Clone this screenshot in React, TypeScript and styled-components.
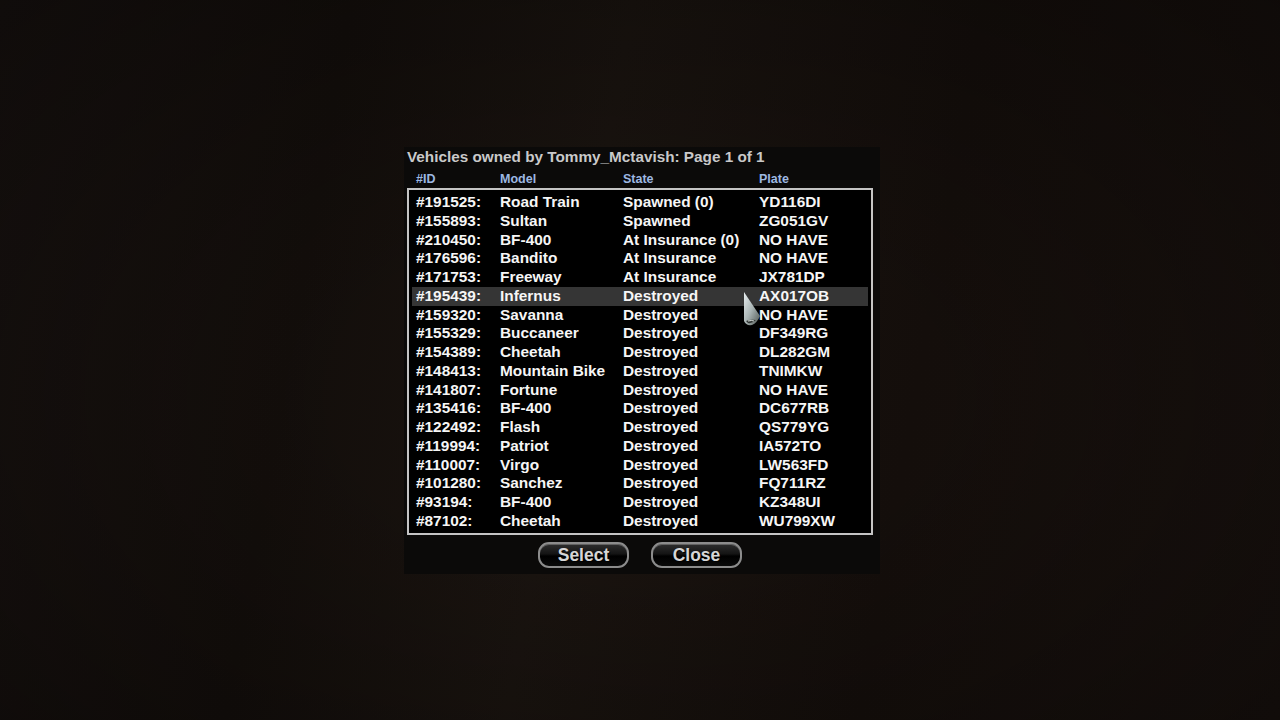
import React from 'react'
import styled, { createGlobalStyle } from 'styled-components'

const GlobalStyle = createGlobalStyle`
  html, body {
    margin: 0;
    padding: 0;
    background: #150f0c;
  }
  * {
    box-sizing: border-box;
  }
`

type Vehicle = {
  id: string
  model: string
  state: string
  plate: string
}

const vehicles: Vehicle[] = [
  { id: '#191525:', model: 'Road Train', state: 'Spawned (0)', plate: 'YD116DI' },
  { id: '#155893:', model: 'Sultan', state: 'Spawned', plate: 'ZG051GV' },
  { id: '#210450:', model: 'BF-400', state: 'At Insurance (0)', plate: 'NO HAVE' },
  { id: '#176596:', model: 'Bandito', state: 'At Insurance', plate: 'NO HAVE' },
  { id: '#171753:', model: 'Freeway', state: 'At Insurance', plate: 'JX781DP' },
  { id: '#195439:', model: 'Infernus', state: 'Destroyed', plate: 'AX017OB' },
  { id: '#159320:', model: 'Savanna', state: 'Destroyed', plate: 'NO HAVE' },
  { id: '#155329:', model: 'Buccaneer', state: 'Destroyed', plate: 'DF349RG' },
  { id: '#154389:', model: 'Cheetah', state: 'Destroyed', plate: 'DL282GM' },
  { id: '#148413:', model: 'Mountain Bike', state: 'Destroyed', plate: 'TNIMKW' },
  { id: '#141807:', model: 'Fortune', state: 'Destroyed', plate: 'NO HAVE' },
  { id: '#135416:', model: 'BF-400', state: 'Destroyed', plate: 'DC677RB' },
  { id: '#122492:', model: 'Flash', state: 'Destroyed', plate: 'QS779YG' },
  { id: '#119994:', model: 'Patriot', state: 'Destroyed', plate: 'IA572TO' },
  { id: '#110007:', model: 'Virgo', state: 'Destroyed', plate: 'LW563FD' },
  { id: '#101280:', model: 'Sanchez', state: 'Destroyed', plate: 'FQ711RZ' },
  { id: '#93194:', model: 'BF-400', state: 'Destroyed', plate: 'KZ348UI' },
  { id: '#87102:', model: 'Cheetah', state: 'Destroyed', plate: 'WU799XW' }
]

const SELECTED = 5

const Screen = styled.div`
  width: 1280px;
  height: 720px;
  overflow: hidden;
  padding: 147px 0 0 404px;
  background:
    radial-gradient(ellipse at 50% 55%, rgba(0, 0, 0, 0) 30%, rgba(0, 0, 0, 0.35) 100%),
    linear-gradient(100deg, #181210 0%, #130e0b 25%, #19130f 45%, #140e0b 70%, #18110e 100%);
  font-family: 'Liberation Sans', Arial, sans-serif;
`

const Dialog = styled.div`
  position: relative;
  width: 476px;
  height: 427px;
  background: #0b0a09;
  padding: 0 7px 0 3px;
  display: flex;
  flex-direction: column;
`

const Title = styled.div`
  height: 21px;
  padding-top: 1px;
  font-size: 15.3px;
  font-weight: bold;
  line-height: 17px;
  color: #c9c9c9;
  white-space: nowrap;
`

const Columns = styled.div`
  display: grid;
  grid-template-columns: 84px 123px 136px 1fr;
  height: 20px;
  padding: 4px 0 0 9px;
  font-size: 12.5px;
  font-weight: bold;
  line-height: 14px;
  color: #9db8e2;
`

const ListBox = styled.div`
  width: 466px;
  height: 347px;
  border: 2px solid #c4c4c4;
  background: #000;
  padding: 3px 3px 0 3px;
`

const Row = styled.div<{ $active?: boolean }>`
  display: grid;
  grid-template-columns: 84px 123px 136px 1fr;
  height: 18.76px;
  padding-left: 4px;
  background: ${(p) => (p.$active ? '#353535' : 'transparent')};
  font-size: 15.4px;
  font-weight: bold;
  line-height: 18.76px;
  color: #f6f6f6;
  white-space: nowrap;
`

const Buttons = styled.div`
  display: flex;
  justify-content: center;
  gap: 22px;
  padding: 7px 0 0 0;
`

const Button = styled.div`
  width: 91px;
  height: 26px;
  border: 2px solid #8c8c8c;
  border-radius: 11px;
  background: linear-gradient(180deg, #2e2e2e 0%, #141414 45%, #000 55%, #0a0a0a 100%);
  box-shadow: inset 0 1px 0 rgba(255, 255, 255, 0.25);
  display: flex;
  align-items: center;
  justify-content: center;
  font-size: 17.5px;
  font-weight: bold;
  color: #d6d6d6;
  text-shadow: 1px 1px 0 #000;
  padding-top: 1px;
`

const Cursor = styled.svg`
  position: absolute;
  left: 339px;
  top: 144px;
`

export default function App() {
  return (
    <>
      <GlobalStyle />
      <Screen>
        <Dialog>
          <Title>Vehicles owned by Tommy_Mctavish: Page 1 of 1</Title>
          <Columns>
            <span>#ID</span>
            <span>Model</span>
            <span>State</span>
            <span>Plate</span>
          </Columns>
          <ListBox>
            {vehicles.map((v, i) => (
              <Row key={v.id} $active={i === SELECTED}>
                <span>{v.id}</span>
                <span>{v.model}</span>
                <span>{v.state}</span>
                <span>{v.plate}</span>
              </Row>
            ))}
          </ListBox>
          <Buttons>
            <Button>Select</Button>
            <Button>Close</Button>
          </Buttons>
          <Cursor width="24" height="36" viewBox="0 0 24 36">
            <defs>
              <linearGradient id="cone" x1="0" y1="0" x2="1" y2="1">
                <stop offset="0" stopColor="#e8eef0" />
                <stop offset="0.5" stopColor="#a9b4b4" />
                <stop offset="1" stopColor="#4d5550" />
              </linearGradient>
            </defs>
            <path d="M1 1 L1 30 Q3 35 9 34 Q14 32 17 25 Z" fill="url(#cone)" />
            <path d="M3 30 Q8 28 13 29 Q9 33 5 32 Z" fill="#303533" />
            <path d="M5 30 Q9 29 11 30" stroke="#d8e0dc" strokeWidth="1" fill="none" />
          </Cursor>
        </Dialog>
      </Screen>
    </>
  )
}
